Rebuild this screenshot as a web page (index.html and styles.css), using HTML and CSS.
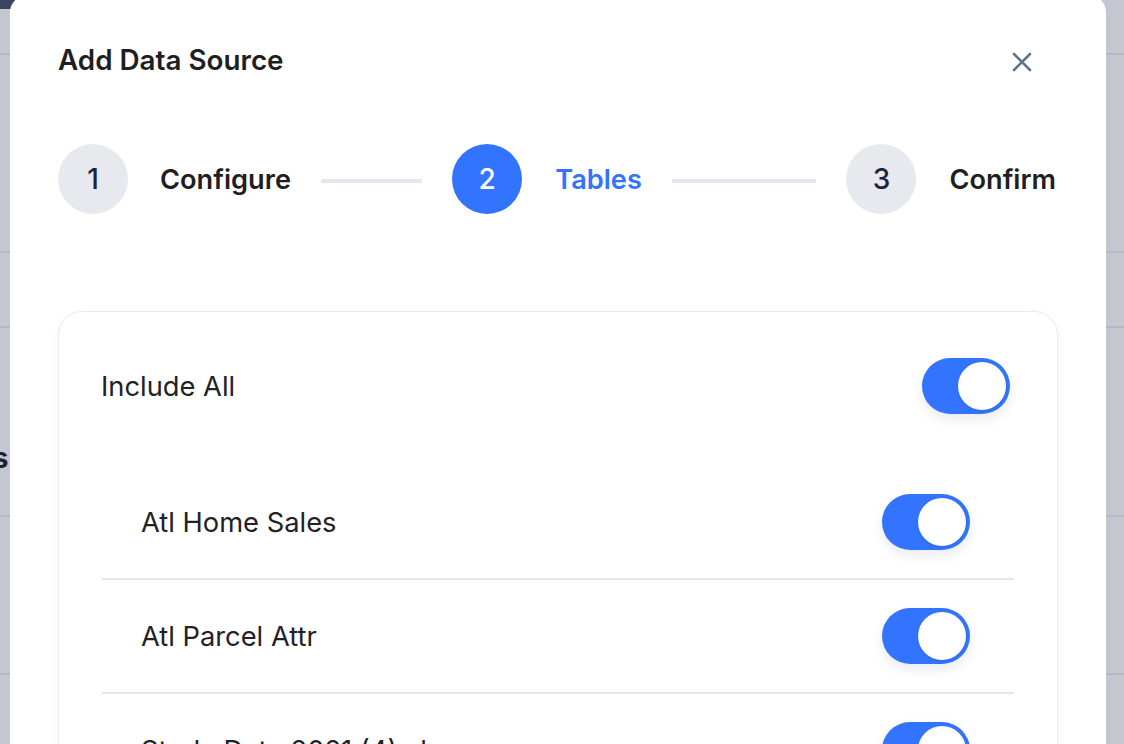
FILE: index.html
```html
<!DOCTYPE html>
<html lang="en">
<head>
<meta charset="utf-8">
<title>Add Data Source</title>
<link rel="stylesheet" href="styles.css">
</head>
<body>
<div class="backdrop">
  <div class="bg-row bg-r1"><span class="bg-logo"></span></div>
  <div class="bg-row bg-r2"></div>
  <div class="bg-row bg-r3"></div>
  <div class="bg-row bg-r4"><span class="bg-text">Sources</span></div>
  <div class="bg-row bg-r5"></div>
  <div class="bg-row bg-r6"></div>
</div>

<div class="modal" role="dialog" aria-label="Add Data Source">
  <header class="modal-head">
    <h2 class="modal-title">Add Data Source</h2>
    <button class="close" aria-label="Close">
      <svg viewBox="0 0 20 20" width="20" height="20"><path d="M2 2 L18 18 M18 2 L2 18" stroke="#5f7389" stroke-width="2.6" stroke-linecap="round" fill="none"/></svg>
    </button>
  </header>

  <ol class="stepper">
    <li class="step"><span class="num">1</span><span class="label">Configure</span><span class="bar"></span></li>
    <li class="step active"><span class="num">2</span><span class="label">Tables</span><span class="bar"></span></li>
    <li class="step last"><span class="num">3</span><span class="label">Confirm</span></li>
  </ol>

  <section class="card">
    <div class="all-row">
      <span class="all-label">Include All</span>
      <span class="toggle"><span class="knob"></span></span>
    </div>
    <ul class="tables">
      <li class="table-row"><span class="table-name">Atl Home Sales</span><span class="toggle"><span class="knob"></span></span></li>
      <li class="table-row"><span class="table-name">Atl Parcel Attr</span><span class="toggle"><span class="knob"></span></span></li>
      <li class="table-row"><span class="table-name">Study Data 2021 (4).xlsx</span><span class="toggle"><span class="knob"></span></span></li>
    </ul>
  </section>
</div>
</body>
</html>
```

FILE: styles.css
```css
* { box-sizing: border-box; }
html, body { margin: 0; padding: 0; }
body {
  width: 1124px;
  height: 744px;
  overflow: hidden;
  position: relative;
  font-family: Inter, "Noto Sans", sans-serif;
  background: #c4c7cf;
}

/* dimmed page behind the dialog */
.backdrop {
  display: flex;
  flex-direction: column;
  height: 744px;
}
.bg-row {
  border-bottom: 2px solid #b4b8c4;
  display: flex;
}
.bg-r1 { height: 55px; }
.bg-r2 { height: 198px; }
.bg-r3 { height: 75px; }
.bg-r4 { height: 189px; align-items: flex-end; padding-bottom: 40px; }
.bg-r5 { height: 158px; }
.bg-r6 { flex: 1; border-bottom: 0; }
.bg-logo {
  width: 60px;
  height: 9px;
  background: #3b4561;
}
.bg-text {
  font-size: 28px;
  line-height: 34px;
  font-weight: 700;
  color: #1c2233;
  margin-left: -104px;
}

/* dialog */
.modal {
  position: absolute;
  left: 10px;
  top: -4px;
  width: 1096px;
  height: 900px;
  background: #fff;
  border-radius: 16px;
  padding: 44px 48px 0 48px;
  overflow: hidden;
}
.modal-head {
  display: flex;
  align-items: center;
  justify-content: space-between;
  height: 40px;
}
.modal-title {
  margin: 0;
  font-size: 27.8px;
  font-weight: 600;
  color: #1f1f22;
  letter-spacing: 0;
}
.close {
  width: 40px;
  height: 40px;
  margin-right: 16px;
  margin-top: 4px;
  border: 0;
  background: transparent;
  padding: 0;
  display: flex;
  align-items: center;
  justify-content: center;
}

/* stepper */
.stepper {
  list-style: none;
  margin: 64px 0 0 0;
  padding: 0;
  display: flex;
  align-items: center;
  height: 70px;
}
.step {
  display: flex;
  align-items: center;
  flex: 1;
}
.step.last { flex: 0 0 auto; padding-right: 2px; }
.num {
  width: 70px;
  height: 70px;
  border-radius: 50%;
  background: #e8e9ee;
  color: #1c2540;
  font-size: 28px;
  font-weight: 500;
  display: flex;
  align-items: center;
  justify-content: center;
  flex: none;
}
.label {
  margin-left: 32px;
  font-size: 27.2px;
  font-weight: 600;
  color: #1f1f22;
}
.bar {
  flex: 1;
  height: 4px;
  background: #e5e7ef;
  margin: 4px 30px 0 30px;
}
.step.active .num { background: #3374ff; color: #fff; }
.step.active .label { color: #3374ff; margin-left: 33px; }
.step.last .label { margin-left: 33px; }

/* card */
.card {
  margin-top: 97px;
  border: 1px solid #e8eaf1;
  border-radius: 24px;
  padding: 46px 43px 0 42px;
  box-shadow: 0 2px 10px rgba(40, 50, 90, 0.04);
  height: 700px;
}
.all-row {
  display: flex;
  align-items: center;
  justify-content: space-between;
  height: 56px;
  padding-right: 4px;
}
.all-label, .table-name {
  font-size: 27.3px;
  font-weight: 400;
  color: #222226;
}
.tables {
  list-style: none;
  margin: 52px 0 0 1px;
  padding: 0;
}
.table-row {
  display: flex;
  align-items: center;
  justify-content: space-between;
  height: 114px;
  padding: 0 44px 0 39px;
  border-bottom: 2px solid #e4e7f0;
}

/* switch */
.toggle {
  position: relative;
  width: 88px;
  height: 56px;
  border-radius: 28px;
  background: #3374ff;
  box-shadow: 0 5px 12px rgba(30, 45, 90, 0.10);
  flex: none;
}
.knob {
  position: absolute;
  right: 4px;
  top: 4px;
  width: 48px;
  height: 48px;
  border-radius: 50%;
  background: #fff;
  box-shadow: 0 1px 3px rgba(20, 30, 60, 0.15);
}
```
